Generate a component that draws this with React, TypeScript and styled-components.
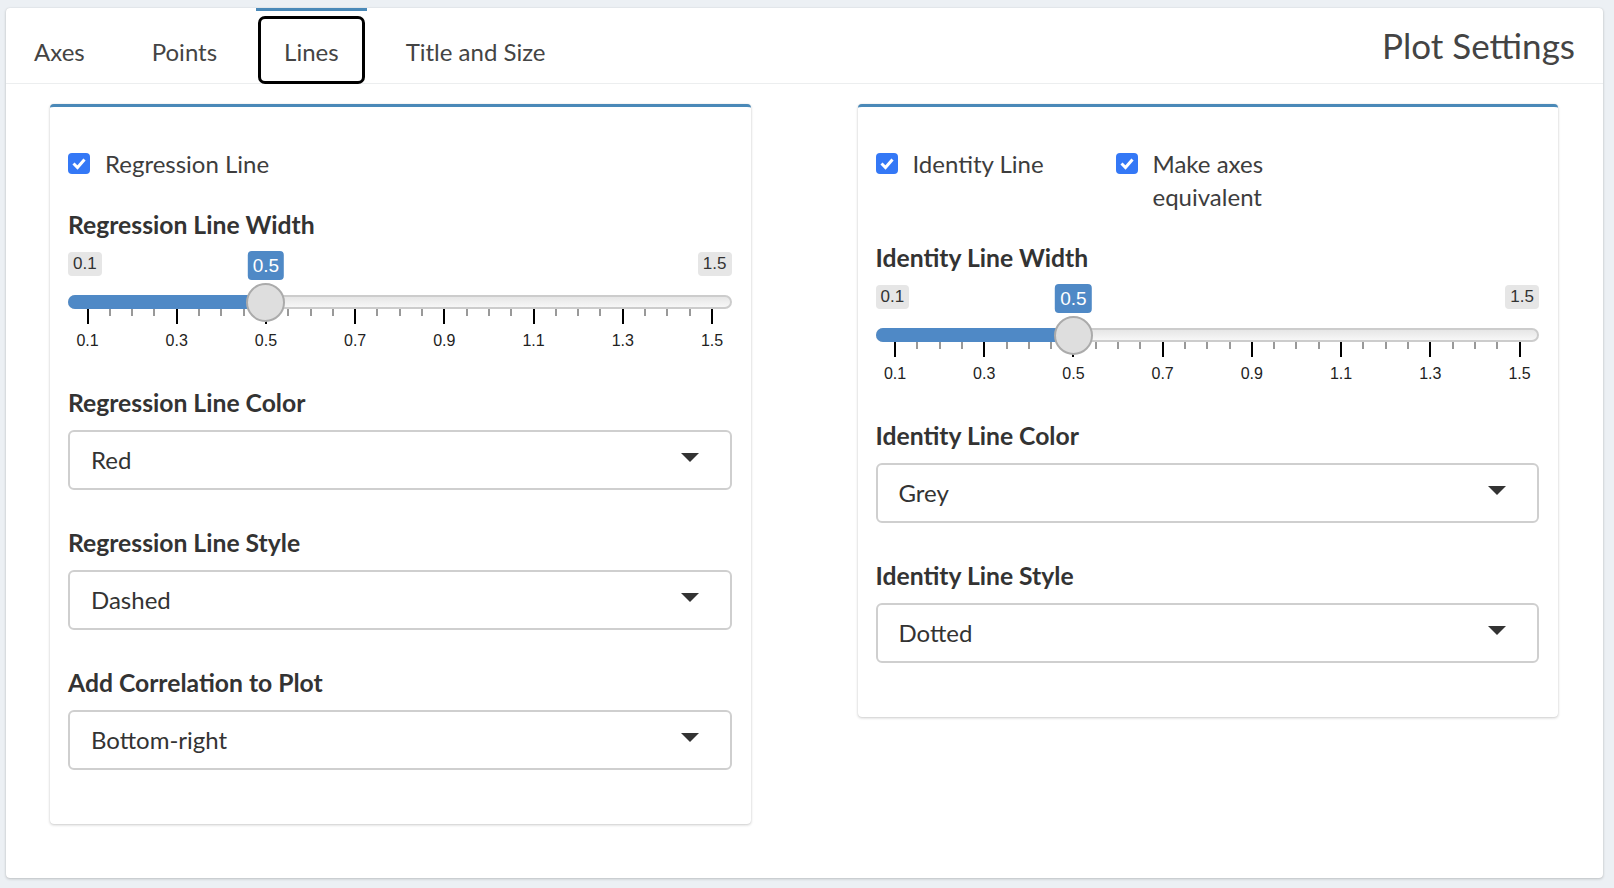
import styled, { createGlobalStyle } from "styled-components";

const GlobalStyle = createGlobalStyle`
  html, body {
    margin: 0;
    padding: 0;
  }
  body {
    background: #ecf0f4;
    font-family: Lato, "Noto Sans", "Liberation Sans", sans-serif;
    color: #333;
  }
  * {
    box-sizing: border-box;
  }
`;

interface SliderProps {
  min: number;
  max: number;
  value: number;
  step: number; // step between grid ticks
  major: number; // every nth tick is a major one
}

interface SelectProps {
  label: string;
  value: string;
}

const tabs = ["Axes", "Points", "Lines", "Title and Size"];

const CheckIcon = () => (
  <svg width="22" height="21" viewBox="0 0 22 21">
    <path d="M5.5 10.5 L9.5 14.5 L16.5 6.5" fill="none" stroke="#fff" strokeWidth="3" />
  </svg>
);

const Checkbox = ({ label }: { label: string }) => (
  <CheckItem>
    <CheckBox>
      <CheckIcon />
    </CheckBox>
    <CheckLabel>{label}</CheckLabel>
  </CheckItem>
);

const RangeSlider = ({ min, max, value, step, major }: SliderProps) => {
  const count = Math.round((max - min) / step);
  const pos = (v: number) => `calc(19.5px + ${(v - min) / (max - min)} * (100% - 39px))`;
  const ticks = Array.from({ length: count + 1 }, (_, i) => min + i * step);

  return (
    <Slider>
      <Track />
      <Bar style={{ width: pos(value) }} />
      {ticks.map((t, i) => (
        <Tick key={i} $major={i % major === 0} style={{ left: pos(t) }} />
      ))}
      {ticks
        .filter((_, i) => i % major === 0)
        .map((t) => (
          <TickText key={t} style={{ left: pos(t) }}>
            {t.toFixed(1)}
          </TickText>
        ))}
      <MinMax $side="left">{min.toFixed(1)}</MinMax>
      <MinMax $side="right">{max.toFixed(1)}</MinMax>
      <Handle style={{ left: pos(value) }} />
      <ValueTag style={{ left: pos(value) }}>{value.toFixed(1)}</ValueTag>
    </Slider>
  );
};

const SelectInput = ({ label, value }: SelectProps) => (
  <Field>
    <FieldLabel>{label}</FieldLabel>
    <SelectBox>
      <span>{value}</span>
      <Caret />
    </SelectBox>
  </Field>
);

const App = () => {
  return (
    <Page>
      <GlobalStyle />
      <Card>
        <CardHeader>
          <TabList>
            {tabs.map((t) => (
              <Tab key={t} $active={t === "Lines"}>
                {t}
              </Tab>
            ))}
          </TabList>
          <CardTitle>Plot Settings</CardTitle>
        </CardHeader>
        <CardBody>
          <Panel>
            <CheckRow>
              <Checkbox label="Regression Line" />
            </CheckRow>
            <FieldLabel>Regression Line Width</FieldLabel>
            <RangeSlider min={0.1} max={1.5} value={0.5} step={0.05} major={4} />
            <SelectInput label="Regression Line Color" value="Red" />
            <SelectInput label="Regression Line Style" value="Dashed" />
            <SelectInput label="Add Correlation to Plot" value="Bottom-right" />
          </Panel>
          <Panel>
            <CheckRow>
              <Checkbox label="Identity Line" />
              <Checkbox label="Make axes equivalent" />
            </CheckRow>
            <FieldLabel>Identity Line Width</FieldLabel>
            <RangeSlider min={0.1} max={1.5} value={0.5} step={0.05} major={4} />
            <SelectInput label="Identity Line Color" value="Grey" />
            <SelectInput label="Identity Line Style" value="Dotted" />
          </Panel>
        </CardBody>
      </Card>
    </Page>
  );
};

const Page = styled.div`
  height: 888px;
  padding: 8px 11px 10px 6px;
`;

const Card = styled.div`
  height: 100%;
  background: #fff;
  border-radius: 4px;
  box-shadow: 0 0 1px rgba(0, 0, 0, 0.125), 0 1px 3px rgba(0, 0, 0, 0.2);
  display: flex;
  flex-direction: column;
`;

const CardHeader = styled.div`
  height: 76px;
  display: flex;
  align-items: stretch;
  border-bottom: 1px solid #eceeef;
  padding-right: 28px;
`;

const TabList = styled.div`
  display: flex;
  gap: 11px;
`;

const Tab = styled.div<{ $active?: boolean }>`
  position: relative;
  display: flex;
  align-items: center;
  padding: 8px 28px 0;
  border-top: 3px solid ${(p) => (p.$active ? "#4a89b8" : "transparent")};
  font-size: 24px;
  color: #444;
  cursor: pointer;

  ${(p) =>
    p.$active &&
    `
    &::after {
      content: "";
      position: absolute;
      top: 5px;
      left: 2px;
      right: 2px;
      bottom: -1px;
      border: 3px solid #000;
      border-radius: 7px;
    }
  `}
`;

const CardTitle = styled.div`
  margin-left: auto;
  align-self: center;
  margin-top: -2px;
  font-size: 35px;
  color: #444;
`;

const CardBody = styled.div`
  display: grid;
  grid-template-columns: 1fr 1fr;
  column-gap: 107px;
  align-items: start;
  padding: 20px 45px 0 44px;
`;

const Panel = styled.div`
  background: #fff;
  border-top: 3px solid #4a89b8;
  border-radius: 4px;
  box-shadow: 0 0 1px rgba(0, 0, 0, 0.125), 0 1px 3px rgba(0, 0, 0, 0.2);
  padding: 39.5px 19px 54px 18px;
`;

const CheckRow = styled.div`
  display: grid;
  grid-template-columns: 240px 190px;
  margin-bottom: 28px;
`;

const CheckItem = styled.label`
  display: flex;
  align-items: flex-start;
  gap: 15px;
`;

const CheckBox = styled.span`
  flex: none;
  width: 22px;
  height: 21px;
  margin-top: 6px;
  border-radius: 4px;
  background: #3478f6;
  display: flex;
`;

const CheckLabel = styled.span`
  font-size: 24px;
  line-height: 33px;
  color: #3d3d3d;
`;

const Field = styled.div`
  & + & {
    margin-top: 36px;
  }
`;

const FieldLabel = styled.div`
  font-size: 24.7px;
  font-weight: 700;
  line-height: 34px;
  color: #333;
  margin-bottom: 10px;
`;

const SelectBox = styled.div`
  height: 60px;
  display: flex;
  align-items: center;
  justify-content: space-between;
  padding: 0 31px 0 21px;
  border: 2px solid #cfcfcf;
  border-radius: 6px;
  font-size: 24px;
  color: #333;
`;

const Caret = styled.span`
  width: 0;
  height: 0;
  margin-top: -5px;
  border-left: 9px solid transparent;
  border-right: 9px solid transparent;
  border-top: 9px solid #333;
`;

const Slider = styled.div`
  position: relative;
  height: 110px;
  margin-bottom: 24px;
  font-family: "Liberation Sans", Arial, sans-serif;
`;

const Track = styled.div`
  position: absolute;
  top: 43px;
  left: 0;
  right: 0;
  height: 14px;
  border: 2px solid #cccccc;
  border-radius: 8px;
  background: linear-gradient(to bottom, #dedede -50%, #ffffff 150%);
`;

const Bar = styled.div`
  position: absolute;
  top: 43px;
  left: 0;
  height: 14px;
  border-radius: 8px 0 0 8px;
  background: #4f89c6;
`;

const Tick = styled.div<{ $major: boolean }>`
  position: absolute;
  top: 57px;
  width: 2px;
  margin-left: -1px;
  height: ${(p) => (p.$major ? "15px" : "7px")};
  background: ${(p) => (p.$major ? "#000" : "#999")};
`;

const TickText = styled.div`
  position: absolute;
  top: 80px;
  transform: translateX(-50%);
  font-size: 16px;
  line-height: 18px;
  color: #222;
`;

const MinMax = styled.div<{ $side: "left" | "right" }>`
  position: absolute;
  top: 0;
  ${(p) => p.$side}: 0;
  height: 24px;
  line-height: 24px;
  padding: 0 5px;
  border-radius: 4px;
  background: #e6e6e6;
  font-size: 17px;
  color: #333;
`;

const Handle = styled.div`
  position: absolute;
  top: 31px;
  width: 39px;
  height: 39px;
  margin-left: -19.5px;
  border-radius: 50%;
  border: 2px solid #ababab;
  background: #dedede;
`;

const ValueTag = styled.div`
  position: absolute;
  top: -1px;
  transform: translateX(-50%);
  height: 29px;
  line-height: 29px;
  padding: 0 5px;
  border-radius: 4px;
  background: #4f89c6;
  font-size: 19px;
  color: #fff;
`;

export default App;
